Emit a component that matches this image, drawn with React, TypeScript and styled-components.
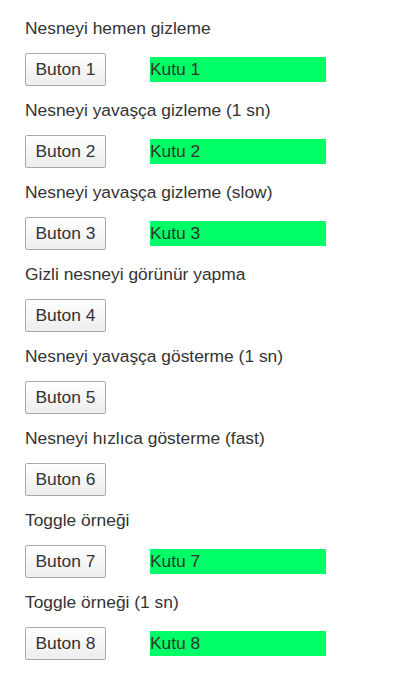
import styled, {createGlobalStyle} from 'styled-components';

const GlobalStyle = createGlobalStyle`
	body {
		margin: 0;
		background: #ffffff;
		font-family: "Liberation Sans", Arial, sans-serif;
		color: #333333;
	}
`;

const Page = styled.div`
	display: flex;
	flex-direction: column;
	gap: 13px;
	padding: 17px 25px 20px;
`;

const Section = styled.section`
	display: flex;
	flex-direction: column;
	gap: 14px;
`;

const Label = styled.div`
	font-size: 17.4px;
	line-height: 22px;
	color: #333333;
`;

const Row = styled.div`
	display: flex;
	align-items: center;
	gap: 44px;
	height: 33px;
`;

const Button = styled.button`
	box-sizing: border-box;
	width: 81px;
	height: 33px;
	padding: 0;
	border: 1px solid #a9a9a9;
	border-radius: 2px;
	background: linear-gradient(#ffffff, #ededed);
	font-family: "Liberation Sans", Arial, sans-serif;
	font-size: 17.4px;
	color: #333333;
	cursor: pointer;
`;

const Box = styled.div`
	width: 176px;
	height: 25px;
	background: #00ff66;
	font-size: 17.4px;
	line-height: 25px;
	color: #333333;
`;

const items = [
	{label: 'Nesneyi hemen gizleme', box: true},
	{label: 'Nesneyi yavaşça gizleme (1 sn)', box: true},
	{label: 'Nesneyi yavaşça gizleme (slow)', box: true},
	{label: 'Gizli nesneyi görünür yapma', box: false},
	{label: 'Nesneyi yavaşça gösterme (1 sn)', box: false},
	{label: 'Nesneyi hızlıca gösterme (fast)', box: false},
	{label: 'Toggle örneği', box: true},
	{label: 'Toggle örneği (1 sn)', box: true},
];

export default function App() {
	return (
		<>
			<GlobalStyle />
			<Page>
				{items.map((item, i) => (
					<Section key={i}>
						<Label>{item.label}</Label>
						<Row>
							<Button>Buton {i + 1}</Button>
							{item.box && <Box>Kutu {i + 1}</Box>}
						</Row>
					</Section>
				))}
			</Page>
		</>
	);
}
